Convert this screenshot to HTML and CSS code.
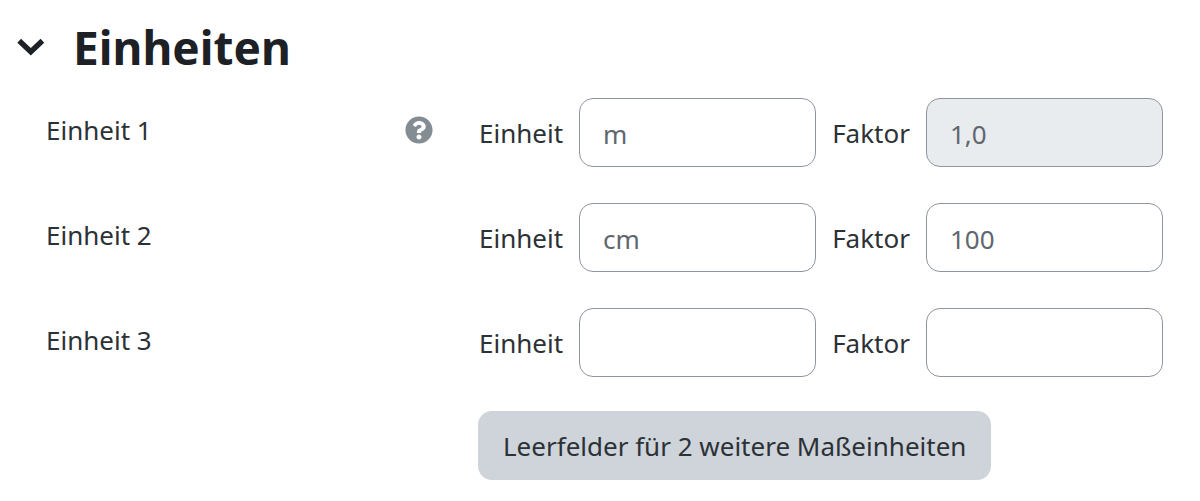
FILE: index.html
```html
<!DOCTYPE html>
<html lang="de">

<head>
    <meta charset="UTF-8">
    <meta name="viewport" content="width=device-width, initial-scale=1.0">
    <title>Einheiten</title>
    <link rel="stylesheet" href="styles.css">
</head>

<body>
    <form class="units">
        <!-- Section header -->
        <header class="section-header">
            <button type="button" class="toggle" aria-label="Einheiten einklappen" aria-expanded="true">
                <svg viewBox="0 0 28 18" width="28" height="18">
                    <path d="M2.200 2.800 L13.800 13.800 L25.400 2.800" fill="none" stroke="currentColor" stroke-width="5.400" />
                </svg>
            </button>
            <h1>Einheiten</h1>
        </header>

        <!-- Unit rows -->
        <div class="row">
            <div class="row-label">
                <span>Einheit 1</span>
                <button type="button" class="help" aria-label="Hilfe zu Einheit 1">
                    <svg viewBox="0 0 512 512" width="28" height="28">
                        <path fill="currentColor" d="M504 256c0 137-111 248-248 248S8 393 8 256 119 8 256 8s248 111 248 248zM262.700 90c-54.500 0-89.300 23-116.500 63.800-3.500 5.300-2.400 12.400 2.700 16.300l34.700 26.300c5.200 3.900 12.600 3 16.700-2.100 17.900-22.700 30.100-35.800 57.300-35.800 20.400 0 45.700 13.100 45.700 33 0 15-12.400 22.700-32.500 34C247.100 238.500 216 254.900 216 296v4c0 6.600 5.400 12 12 12h56c6.600 0 12-5.400 12-12v-1.300c0-28.500 83.200-29.600 83.200-106.700 0-58-60.200-102-116.500-102zM256 338c-25.400 0-46 20.600-46 46s20.600 46 46 46 46-20.600 46-46-20.600-46-46-46z" />
                    </svg>
                </button>
            </div>
            <div class="fields">
                <label for="unit-1">Einheit</label>
                <input type="text" id="unit-1" value="m">
                <label for="factor-1">Faktor</label>
                <input type="text" id="factor-1" value="1,0" disabled>
            </div>
        </div>
        <div class="row">
            <div class="row-label">
                <span>Einheit 2</span>
            </div>
            <div class="fields">
                <label for="unit-2">Einheit</label>
                <input type="text" id="unit-2" value="cm">
                <label for="factor-2">Faktor</label>
                <input type="text" id="factor-2" value="100">
            </div>
        </div>
        <div class="row">
            <div class="row-label">
                <span>Einheit 3</span>
            </div>
            <div class="fields">
                <label for="unit-3">Einheit</label>
                <input type="text" id="unit-3">
                <label for="factor-3">Faktor</label>
                <input type="text" id="factor-3">
            </div>
        </div>

        <!-- Add more rows -->
        <div class="actions">
            <button type="submit" class="add">Leerfelder für 2 weitere Maßeinheiten</button>
        </div>
    </form>
</body>

</html>
```

FILE: styles.css
```css
* {
    box-sizing: border-box;
}

body {
    margin: 0;
    background-color: #ffffff;
    color: #2c3136;
    font-family: "Noto Sans", sans-serif;
    font-size: 26px;
    line-height: 36px;
}

button {
    border: none;
    padding: 0;
    background: none;
    color: inherit;
    font: inherit;
    cursor: pointer;
}

svg {
    display: block;
}

.units {
    padding: 15px 37px 20px 46px;
}

/* Header */
.section-header {
    display: flex;
    align-items: center;
    gap: 28px;
    margin-left: -29px;
    margin-bottom: 19px;
    color: #1d2125;
}

h1 {
    margin: 0;
    font-size: 46px;
    line-height: 64px;
}

/* Rows */
.row {
    display: grid;
    grid-template-columns: 433px minmax(0, 1fr);
    margin-bottom: 36px;
}

.row-label {
    display: flex;
    justify-content: space-between;
    align-items: center;
    height: 36px;
    margin-top: 14px;
    padding-right: 46px;
}

.help {
    color: #848c94;
}

.fields {
    display: flex;
    align-items: center;
    gap: 16px;
}

input {
    flex: 1;
    min-width: 0;
    height: 69px;
    padding: 2px 23px 0;
    border: 1px solid #8f959e;
    border-radius: 14px;
    background-color: #ffffff;
    color: #60676e;
    font: inherit;
}

input:disabled {
    background-color: #e9ecef;
}

/* Button */
.actions {
    margin-left: 432px;
    margin-top: -2px;
}

.add {
    height: 69px;
    padding: 0 25px;
    border-radius: 14px;
    background-color: #ced4da;
}
```
